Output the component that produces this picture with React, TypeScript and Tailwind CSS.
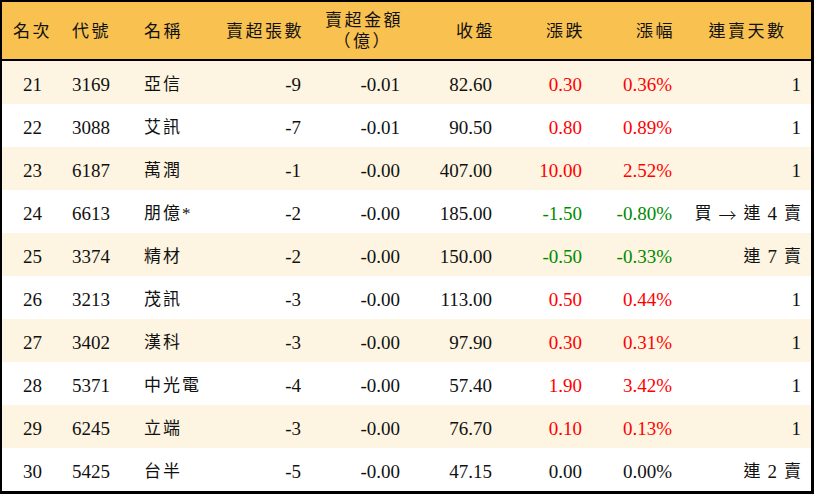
type Row = {
  rank: string
  code: string
  name: string
  lots: string
  amount: string
  close: string
  change: string
  pct: string
  streak: string
  dir: "up" | "down" | "flat"
}

const rows: Row[] = [
  { rank: "21", code: "3169", name: "亞信", lots: "-9", amount: "-0.01", close: "82.60", change: "0.30", pct: "0.36%", streak: "1", dir: "up" },
  { rank: "22", code: "3088", name: "艾訊", lots: "-7", amount: "-0.01", close: "90.50", change: "0.80", pct: "0.89%", streak: "1", dir: "up" },
  { rank: "23", code: "6187", name: "萬潤", lots: "-1", amount: "-0.00", close: "407.00", change: "10.00", pct: "2.52%", streak: "1", dir: "up" },
  { rank: "24", code: "6613", name: "朋億*", lots: "-2", amount: "-0.00", close: "185.00", change: "-1.50", pct: "-0.80%", streak: "買 → 連 4 賣", dir: "down" },
  { rank: "25", code: "3374", name: "精材", lots: "-2", amount: "-0.00", close: "150.00", change: "-0.50", pct: "-0.33%", streak: "連 7 賣", dir: "down" },
  { rank: "26", code: "3213", name: "茂訊", lots: "-3", amount: "-0.00", close: "113.00", change: "0.50", pct: "0.44%", streak: "1", dir: "up" },
  { rank: "27", code: "3402", name: "漢科", lots: "-3", amount: "-0.00", close: "97.90", change: "0.30", pct: "0.31%", streak: "1", dir: "up" },
  { rank: "28", code: "5371", name: "中光電", lots: "-4", amount: "-0.00", close: "57.40", change: "1.90", pct: "3.42%", streak: "1", dir: "up" },
  { rank: "29", code: "6245", name: "立端", lots: "-3", amount: "-0.00", close: "76.70", change: "0.10", pct: "0.13%", streak: "1", dir: "up" },
  { rank: "30", code: "5425", name: "台半", lots: "-5", amount: "-0.00", close: "47.15", change: "0.00", pct: "0.00%", streak: "連 2 賣", dir: "flat" },
]

const grid = "grid grid-cols-[60px_72px_76px_101px_99px_92px_90px_90px_129px]"

const dirColor = {
  up: "text-[#ff0000]",
  down: "text-[#008a00]",
  flat: "text-[#111]",
}

function Streak({ text }: { text: string }) {
  if (text === "1") return <span>1</span>
  // split into words: CJK chars, digits and the arrow each get their own size
  return (
    <span className="flex justify-end items-center gap-[7px]">
      {text.split(" ").map((t, i) =>
        /\d/.test(t) ? (
          <span key={i} className="text-[19px]">{t}</span>
        ) : t === "→" ? (
          <span key={i} className="font-['Noto_Sans_CJK_TC',sans-serif] text-[18px] font-light">→</span>
        ) : (
          <span key={i} className="text-[17px]">{t}</span>
        )
      )}
    </span>
  )
}

export default function App() {
  return (
    <div className="w-[814px] h-[496px] bg-white font-['Liberation_Serif','Noto_Sans_CJK_TC',serif] text-[#111]">
      <div className="border-black border-l-2 border-t-2 border-r-[3px] border-b-[3px]">
        {/* header */}
        <div className={`${grid} h-[59px] items-center bg-[#f8c150] border-b-2 border-black text-[17px] tracking-[2.5px] leading-none pt-[1px]`}>
          <div className="text-center pl-[1px]">名次</div>
          <div className="pl-[10px]">代號</div>
          <div className="pl-[10px]">名稱</div>
          <div className="text-right pr-[7px]">賣超張數</div>
          <div className="flex flex-col items-end pr-[7px] gap-[4px]">
            <span>賣超金額</span>
            <span className="pr-[11px]">（億）</span>
          </div>
          <div className="text-right pr-[7px]">收盤</div>
          <div className="text-right pr-[7px]">漲跌</div>
          <div className="text-right pr-[7px]">漲幅</div>
          <div className="text-center pl-[2px]">連賣天數</div>
        </div>

        {rows.map((r, i) => (
          <div
            key={r.rank}
            className={`${grid} h-[43px] items-center pt-[4px] text-[19px] leading-none ${i % 2 === 0 ? "bg-[#fdf5e1]" : "bg-white"}`}
          >
            <div className="text-center pl-[1px]">{r.rank}</div>
            <div className="pl-[10px]">{r.code}</div>
            <div className="pl-[10px] text-[17px] tracking-[2px]">{r.name}</div>
            <div className="text-right pr-[10px]">{r.lots}</div>
            <div className="text-right pr-[10px]">{r.amount}</div>
            <div className="text-right pr-[10px]">{r.close}</div>
            <div className={`text-right pr-[10px] ${dirColor[r.dir]}`}>{r.change}</div>
            <div className={`text-right pr-[10px] ${dirColor[r.dir]}`}>{r.pct}</div>
            <div className="text-right pr-[10px]">
              <Streak text={r.streak} />
            </div>
          </div>
        ))}
      </div>
    </div>
  )
}
